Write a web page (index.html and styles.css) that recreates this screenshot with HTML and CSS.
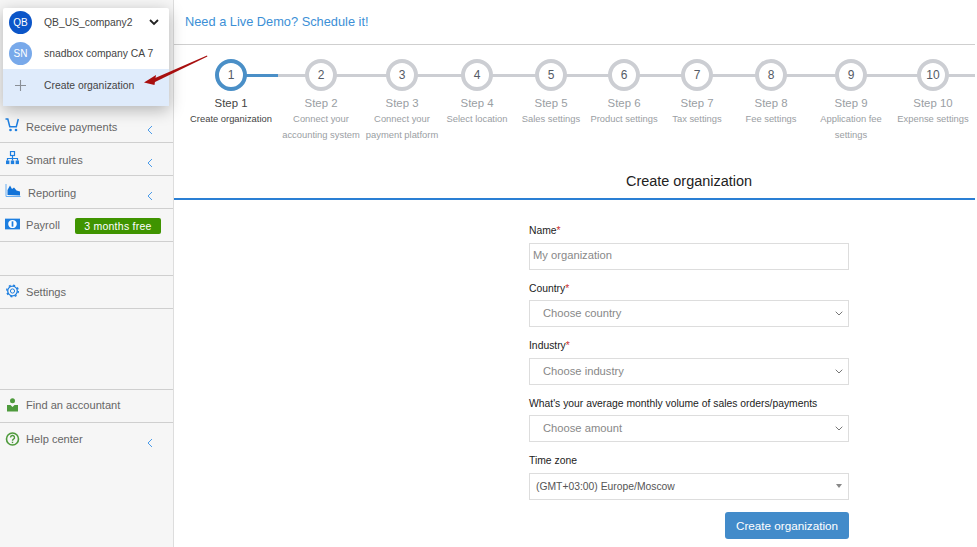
FILE: index.html
```html
<!DOCTYPE html>
<html lang="en">
<head>
<meta charset="utf-8">
<title>Create organization</title>
<link rel="stylesheet" href="styles.css">
</head>
<body>
<div class="app">
  <aside class="sidebar">
    <nav class="nav-top">
      <a class="nav-item"><svg class="ico" viewBox="0 0 14 14"><path d="M0 1h2.300l2 7.800h6.500L12.800 1" fill="none" stroke="#1e7fe0" stroke-width="1.500"/><circle cx="5" cy="12" r="1.300" fill="#1e7fe0"/><circle cx="10.500" cy="12" r="1.300" fill="#1e7fe0"/></svg><span class="nav-label">Receive payments</span><svg class="chev" viewBox="0 0 6 10"><path d="M5 1L1 5l4 4" fill="none" stroke="#4a9bea" stroke-width="1"/></svg></a>
      <a class="nav-item"><svg class="ico" viewBox="0 0 14 14"><rect x="5" y="0.500" width="4" height="4" fill="none" stroke="#1e7fe0" stroke-width="1.200"/><path d="M7 4.500v3M2 9.500v-2h10v2M7 7.500v2" fill="none" stroke="#1e7fe0" stroke-width="1.200"/><rect x="0.500" y="9.500" width="3.400" height="3.600" fill="#1e7fe0"/><rect x="5.300" y="9.500" width="3.400" height="3.600" fill="#1e7fe0"/><rect x="10.100" y="9.500" width="3.400" height="3.600" fill="#1e7fe0"/></svg><span class="nav-label">Smart rules</span><svg class="chev" viewBox="0 0 6 10"><path d="M5 1L1 5l4 4" fill="none" stroke="#4a9bea" stroke-width="1"/></svg></a>
      <a class="nav-item"><svg class="ico ico-wide" viewBox="0 0 15 14"><path d="M0.500 0v12.500H15" fill="none" stroke="#6aaef0" stroke-width="1"/><path d="M2 11V6l2.500-4.500 2 3.500 2-1.500 2.500 3 3.500 1v4z" fill="#1273d8"/></svg><span class="nav-label nav-label-shift">Reporting</span><svg class="chev" viewBox="0 0 6 10"><path d="M5 1L1 5l4 4" fill="none" stroke="#4a9bea" stroke-width="1"/></svg></a>
      <a class="nav-item"><svg class="ico" viewBox="0 0 14 12"><rect x="0" y="1" width="14" height="10" fill="#1e7fe0"/><ellipse cx="7" cy="6" rx="4" ry="3.800" fill="#fff"/><rect x="6.200" y="3.500" width="1.600" height="5" fill="#1e7fe0"/></svg><span class="nav-label nav-label-tight">Payroll</span><span class="badge">3 months free</span></a>
    </nav>
    <div class="nav-gap-small"></div>
    <a class="nav-item nav-item-top"><svg class="ico" viewBox="0 0 14 14"><circle cx="7" cy="7" r="4.800" fill="none" stroke="#1e7fe0" stroke-width="1.300"/><circle cx="7" cy="7" r="5.800" fill="none" stroke="#1e7fe0" stroke-width="1.400" stroke-dasharray="2 2.550"/><circle cx="7" cy="7" r="2.100" fill="none" stroke="#1e7fe0" stroke-width="1"/></svg><span class="nav-label nav-label-tight">Settings</span></a>
    <div class="nav-gap-large"></div>
    <a class="nav-item nav-item-top"><svg class="ico" viewBox="0 0 14 14"><circle cx="7" cy="2.800" r="2.500" fill="#4e9a3c"/><path d="M1.500 7h3.500l2 2 2-2h3.500v6.500h-11z" fill="#4e9a3c"/></svg><span class="nav-label nav-label-lift">Find an accountant</span></a>
    <a class="nav-item nav-item-last"><svg class="ico" viewBox="0 0 14 14"><circle cx="7" cy="7" r="6" fill="none" stroke="#4e9a3c" stroke-width="1.600"/><path d="M5 5.500a2 2 0 1 1 3 1.700c-.7.400-1 .800-1 1.600" fill="none" stroke="#4e9a3c" stroke-width="1.400"/><rect x="6.300" y="9.700" width="1.400" height="1.400" fill="#4e9a3c"/></svg><span class="nav-label nav-label-tight">Help center</span><svg class="chev" viewBox="0 0 6 10"><path d="M5 1L1 5l4 4" fill="none" stroke="#4a9bea" stroke-width="1"/></svg></a>
  </aside>
  <main class="main">
    <header class="topbar"><a class="demo">Need a Live Demo? Schedule it!</a></header>
    <ol class="steps">
      <li class="step step-active"><span class="dot">1</span><span class="step-name">Step 1</span><span class="step-desc">Create organization</span></li>
      <li class="step"><span class="dot">2</span><span class="step-name">Step 2</span><span class="step-desc">Connect your<br>accounting system</span></li>
      <li class="step"><span class="dot">3</span><span class="step-name">Step 3</span><span class="step-desc">Connect your<br>payment platform</span></li>
      <li class="step"><span class="dot">4</span><span class="step-name">Step 4</span><span class="step-desc">Select location</span></li>
      <li class="step"><span class="dot">5</span><span class="step-name">Step 5</span><span class="step-desc">Sales settings</span></li>
      <li class="step"><span class="dot">6</span><span class="step-name">Step 6</span><span class="step-desc">Product settings</span></li>
      <li class="step"><span class="dot">7</span><span class="step-name">Step 7</span><span class="step-desc">Tax settings</span></li>
      <li class="step"><span class="dot">8</span><span class="step-name">Step 8</span><span class="step-desc">Fee settings</span></li>
      <li class="step"><span class="dot">9</span><span class="step-name">Step 9</span><span class="step-desc">Application fee<br>settings</span></li>
      <li class="step"><span class="dot">10</span><span class="step-name">Step 10</span><span class="step-desc">Expense settings</span></li>
    </ol>
    <h1 class="page-title">Create organization</h1>
    <form class="form">
      <div class="field"><label class="label">Name<i class="req">*</i></label><div class="control control-input">My organization</div></div>
      <div class="field"><label class="label">Country<i class="req">*</i></label><div class="control control-select">Choose country<svg class="caret" viewBox="0 0 8 5"><path d="M.7.7L4 4 7.300.7" fill="none" stroke="#777" stroke-width="1"/></svg></div></div>
      <div class="field"><label class="label">Industry<i class="req">*</i></label><div class="control control-select">Choose industry<svg class="caret" viewBox="0 0 8 5"><path d="M.7.7L4 4 7.300.7" fill="none" stroke="#777" stroke-width="1"/></svg></div></div>
      <div class="field"><label class="label">What's your average monthly volume of sales orders/payments</label><div class="control control-select">Choose amount<svg class="caret" viewBox="0 0 8 5"><path d="M.7.7L4 4 7.300.7" fill="none" stroke="#777" stroke-width="1"/></svg></div></div>
      <div class="field"><label class="label">Time zone</label><div class="control control-zone">(GMT+03:00) Europe/Moscow<span class="tri"></span></div></div>
      <div class="actions"><button type="button" class="btn">Create organization</button></div>
    </form>
  </main>
</div>
<div class="org-menu">
  <div class="org-row org-row-first"><span class="avatar avatar-dark">QB</span><span class="org-name">QB_US_company2</span><svg class="org-chev" viewBox="0 0 10 7"><path d="M1 1l4 4 4-4" fill="none" stroke="#222" stroke-width="1.800"/></svg></div>
  <div class="org-row"><span class="avatar avatar-light">SN</span><span class="org-name">snadbox company CA 7</span></div>
  <div class="org-row org-row-add"><svg class="plus" viewBox="0 0 11 11"><path d="M5.500 0v11M0 5.500h11" stroke="#8a8f96" stroke-width="1.100" fill="none"/></svg><span class="org-name">Create organization</span></div>
</div>
<svg class="arrow" viewBox="0 0 70 40"><path d="M64 .6l.4 1L12 27l-1-3.500z" fill="#a80f0f"/><path d="M1 27.500L13 20l-1.500 10z" fill="#a80f0f"/></svg>
</body>
</html>
```
FILE: styles.css
```css
* { box-sizing: border-box; }
html, body { margin: 0; height: 100%; overflow: hidden; background: #fff; }
body { font-family: "Liberation Sans", Arial, sans-serif; color: #333; position: relative; }
.app { display: flex; height: 547px; }

.sidebar { width: 174px; flex: none; background: #f6f6f6; border-right: 1px solid #ddd; padding-top: 110px; }
.nav-item { display: flex; align-items: center; height: 33px; border-bottom: 1px solid #cfcfcf; padding-left: 5px; font-size: 11.100px; color: #666; position: relative; }
.nav-item-top { border-top: 1px solid #cfcfcf; height: 34px; }
.nav-item-last { border-bottom: 0; }
.nav-gap-small { height: 33px; }
.nav-gap-large { height: 80px; }
.ico { width: 15px; height: 14px; flex: none; margin-top: -2px; }
.ico-wide { width: 16px; }
.nav-label { margin-left: 6px; margin-top: 1px; }
.nav-label-shift { margin-left: 7px; }
.nav-label-tight { margin-top: -1px; }
.nav-label-lift { margin-top: -2px; }
.chev { position: absolute; left: 147px; top: 15px; width: 6px; height: 10px; }
.badge { margin-left: 15px; margin-top: 1px; width: 86px; height: 16px; background: #3f9400; color: #fff; border-radius: 2px; font-size: 10.500px; line-height: 16px; text-align: center; letter-spacing: .25px; }

.main { flex: 1; min-width: 0; margin-right: 2px; }
.topbar { height: 45px; border-bottom: 1px solid #cfcfcf; padding: 14px 0 0 11px; }
.demo { display: block; color: #3c8fd6; font-size: 12.800px; line-height: 15px; }

.steps { list-style: none; margin: 0; padding: 14px 0 0 14px; height: 109px; display: grid; grid-template-columns: 86px 94px 68px 82px 66px 80px 66px 82px 78px 86px; position: relative; }
.steps::before { content: ""; position: absolute; left: 57px; right: 0; top: 29px; height: 3px; background: #ccced3; }
.steps::after { content: ""; position: absolute; left: 57px; width: 47px; top: 29px; height: 3px; background: #4a8fc7; }
.step { display: flex; flex-direction: column; align-items: center; position: relative; z-index: 1; color: #9a9ea3; }
.dot { width: 32px; height: 32px; border-radius: 50%; border: 4px solid #ccced3; background: #fff; display: flex; align-items: center; justify-content: center; font-size: 12px; color: #555b66; flex: none; }
.step-name { font-size: 11.400px; line-height: 14px; margin-top: 5px; white-space: nowrap; }
.step-desc { font-size: 9.400px; line-height: 16px; margin-top: 1px; white-space: nowrap; text-align: center; }
.step-active { color: #444; }
.step-active .dot { border-color: #4a8fc7; }

.page-title { margin: 0; height: 46px; padding: 19px 0 0 229px; font-size: 14.450px; line-height: 17px; font-weight: 400; text-align: center; color: #222; border-bottom: 2px solid #2a7fd4; }

.form { width: 320px; margin: 23.300px 0 0 355px; }
.field { margin-bottom: 11px; }
.label { display: block; font-size: 10.350px; line-height: 15px; height: 15px; margin-bottom: 4.500px; color: #222; }
.req { color: #c33; font-style: normal; }
.control { height: 27px; border: 1px solid #ddd; background: #fff; font-size: 11.200px; line-height: 25px; color: #888; position: relative; }
.control-input { padding-left: 3px; line-height: 23px; }
.control-select { padding-left: 13px; }
.control-zone { padding-left: 6px; color: #555; font-size: 10.350px; line-height: 26px; }
.caret { position: absolute; right: 5px; top: 10px; width: 8px; height: 5px; }
.tri { position: absolute; right: 6px; top: 10px; border: 3px solid transparent; border-top: 4px solid #888; border-bottom: 0; }
.actions { display: flex; justify-content: flex-end; margin-top: 12px; }
.btn { width: 124px; height: 27px; border: 0; border-radius: 3px; background: #428bca; color: #fff; font: 11.700px "Liberation Sans", Arial, sans-serif; }

.org-menu { position: absolute; left: 3px; top: 8px; width: 166px; height: 98px; background: #fff; border-radius: 2px; box-shadow: 0 4px 16px rgba(0,0,0,.28); display: flex; flex-direction: column; }
.org-row { display: flex; align-items: center; height: 31px; font-size: 10.350px; color: #444; padding-left: 6px; flex: none; }
.org-row-first { height: 30px; padding-bottom: 1px; }
.org-row-add { background: #dfebfb; height: 37px; padding-bottom: 4px; }
.avatar { width: 23px; height: 23px; border-radius: 50%; color: #fff; font-size: 10px; display: flex; align-items: center; justify-content: center; flex: none; }
.avatar-dark { background: #0b55c8; }
.avatar-light { background: #78a9ea; }
.org-name { margin-left: 12px; white-space: nowrap; }
.org-chev { width: 10px; height: 7px; margin-left: 16px; }
.plus { width: 11px; height: 11px; margin-left: 6px; margin-right: 6px; flex: none; }
.arrow { position: absolute; left: 143px; top: 55px; width: 70px; height: 40px; }
```
